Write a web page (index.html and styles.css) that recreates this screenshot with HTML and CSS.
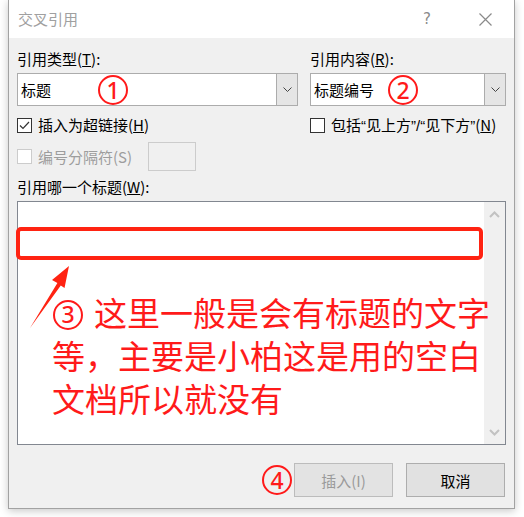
FILE: index.html
```html
<!DOCTYPE html>
<html lang="zh-CN">
<head>
<meta charset="utf-8">
<title>交叉引用</title>
<link rel="stylesheet" href="styles.css">
</head>
<body>
<div class="page">
  <div class="dialog">
    <div class="titlebar">
      <span class="title">交叉引用</span>
      <span class="help">?</span>
      <span class="close">
        <svg width="13" height="13" viewBox="0 0 13 13"><path d="M0.5 0.5 L12.5 12.5 M12.5 0.5 L0.5 12.5" stroke="#8a8a8a" stroke-width="1.2" fill="none"/></svg>
      </span>
    </div>
    <div class="body">
      <div class="grid">
        <div class="label">引用类型(<u>T</u>):</div>
        <div class="label">引用内容(<u>R</u>):</div>
        <div class="combo">
          <span class="combo-text">标题</span>
          <span class="combo-btn"><svg width="9" height="5" viewBox="0 0 9 5"><path d="M0.5 0.5 L4.5 4.5 L8.5 0.5" stroke="#444" stroke-width="1" fill="none"/></svg></span>
        </div>
        <div class="combo">
          <span class="combo-text">标题编号</span>
          <span class="combo-btn"><svg width="9" height="5" viewBox="0 0 9 5"><path d="M0.5 0.5 L4.5 4.5 L8.5 0.5" stroke="#444" stroke-width="1" fill="none"/></svg></span>
        </div>
        <div class="check-row">
          <span class="box"><svg width="13" height="13" viewBox="0 0 13 13"><path d="M2 6.5 L5 9.5 L11 3" stroke="#333" stroke-width="1.2" fill="none"/></svg></span>
          <span class="check-text">插入为超链接(<u>H</u>)</span>
        </div>
        <div class="check-row">
          <span class="box"></span>
          <span class="check-text">包括<span class="q">“</span>见上方<span class="q">”/“</span>见下方<span class="q">”</span>(<u>N</u>)</span>
        </div>
      </div>
      <div class="sep-row">
        <div class="check-row disabled">
          <span class="box"></span>
          <span class="check-text">编号分隔符(S)</span>
        </div>
        <div class="sep-input"></div>
      </div>
      <div class="label list-label">引用哪一个标题(<u>W</u>):</div>
      <div class="listbox">
        <div class="list-area"></div>
        <div class="scrollbar">
          <svg width="11" height="7" viewBox="0 0 11 7"><path d="M1 6 L5.5 1.5 L10 6" stroke="#c2c2c2" stroke-width="2" fill="none"/></svg>
          <svg width="11" height="7" viewBox="0 0 11 7"><path d="M1 1 L5.5 5.5 L10 1" stroke="#c2c2c2" stroke-width="2" fill="none"/></svg>
        </div>
      </div>
      <div class="buttons">
        <button class="btn btn-disabled">插入(I)</button>
        <button class="btn">取消</button>
      </div>
    </div>
  </div>

  <div class="circ num1">1</div>
  <div class="circ num2">2</div>
  <div class="circ num4">4</div>
  <div class="highlight"></div>
  <svg class="arrow" width="60" height="80" viewBox="20 260 60 80">
    <polygon points="69,266 64.5,288 60.8,285.5 30,328 57.4,283 52,280" fill="#ff2312"/>
  </svg>
  <div class="note-text"><span class="circ inline">3</span>这里一般是会有标题的文字<br>等，主要是小柏这是用的空白<br>文档所以就没有</div>
</div>
</body>
</html>
```

FILE: styles.css
```css
html, body {
  margin: 0;
  padding: 0;
  background: #ffffff;
}

.page {
  position: relative;
  width: 524px;
  height: 517px;
  overflow: hidden;
  font-family: "Noto Sans CJK SC", "Noto Sans", sans-serif;
  font-size: 15px;
  color: #000;
}

.dialog {
  position: absolute;
  left: 8px;
  top: 0;
  width: 505px;
  height: 508px;
  border: 1px solid #a2a2a2;
  border-top: none;
  background: #f0f0f0;
  box-shadow: 0 2px 8px rgba(0, 0, 0, 0.22);
  display: flex;
  flex-direction: column;
}

.titlebar {
  height: 38px;
  background: #ffffff;
  display: flex;
  align-items: center;
  padding-left: 9px;
  flex-shrink: 0;
}

.title {
  color: #a0a0a0;
  font-size: 15px;
  line-height: 20px;
  flex: 1;
}

.help {
  color: #8a8a8a;
  font-family: "DejaVu Sans", sans-serif;
  font-size: 15px;
  line-height: 20px;
  width: 10px;
  margin-right: 46px;
}

.close {
  display: flex;
  width: 13px;
  height: 13px;
  margin-right: 22px;
}

.body {
  padding: 11px 8px 0 8px;
  display: flex;
  flex-direction: column;
}

.grid {
  display: grid;
  grid-template-columns: 281px 196px;
  column-gap: 12px;
}

.label {
  line-height: 20px;
  height: 20px;
  white-space: nowrap;
}

.combo {
  margin-top: 4px;
  height: 33px;
  box-sizing: border-box;
  border: 1px solid #acacac;
  background: #ffffff;
  display: flex;
  align-items: stretch;
}

.combo-text {
  flex: 1;
  padding-left: 3px;
  line-height: 31px;
}

.combo-btn {
  width: 20px;
  border-left: 1px solid #acacac;
  background: #e5e5e5;
  display: flex;
  align-items: center;
  justify-content: center;
}

.check-row {
  margin-top: 9px;
  height: 20px;
  display: flex;
  align-items: center;
  white-space: nowrap;
}

.box {
  width: 15px;
  height: 15px;
  box-sizing: border-box;
  border: 1px solid #333333;
  background: #ffffff;
  display: flex;
  align-items: center;
  justify-content: center;
  margin-right: 6px;
  flex-shrink: 0;
}

.check-text {
  line-height: 20px;
}

.q {
  font-family: "Liberation Sans", sans-serif;
}

.sep-row {
  margin-top: 7px;
  display: grid;
  grid-template-columns: 131px 48px;
  align-items: center;
}

.sep-row .check-row {
  margin-top: 0;
}

.disabled .box {
  border-color: #cccccc;
}

.disabled .check-text {
  color: #9d9d9d;
}

.sep-input {
  height: 29px;
  box-sizing: border-box;
  border: 1px solid #cccccc;
  background: #f0f0f0;
}

.list-label {
  margin-top: 6px;
}

.listbox {
  margin-top: 4px;
  height: 244px;
  box-sizing: border-box;
  border: 1px solid #828790;
  background: #ffffff;
  display: flex;
}

.list-area {
  flex: 1;
}

.scrollbar {
  width: 21px;
  background: #f0f0f0;
  display: flex;
  flex-direction: column;
  justify-content: space-between;
  align-items: center;
  padding: 9px 0 8px 0;
}

.buttons {
  margin-top: 18px;
  display: flex;
  justify-content: flex-end;
  gap: 13px;
  padding-right: 1px;
}

.btn {
  width: 99px;
  height: 34px;
  box-sizing: border-box;
  border: 1px solid #adadad;
  background: #e1e1e1;
  font-family: "Noto Sans CJK SC", "Noto Sans", sans-serif;
  font-size: 15px;
  color: #000000;
  padding: 0;
  margin: 0;
}

.btn-disabled {
  color: #9a9a9a;
  border-color: #bcbcbc;
  background: #e3e3e3;
}

/* annotations layered over the dialog */
.circ {
  position: absolute;
  width: 30px;
  height: 30px;
  box-sizing: border-box;
  border: 2.5px solid #ff1a1a;
  border-radius: 50%;
  display: flex;
  align-items: center;
  justify-content: center;
  font-family: "Noto Sans", sans-serif;
  font-size: 23px;
  line-height: 23px;
  font-weight: 500;
  color: #ff1a1a;
}

.num1 { left: 98px; top: 75px; }
.num2 { left: 388px; top: 75px; }
.num4 { left: 262px; top: 465px; }

.circ.inline {
  position: static;
  display: inline-flex;
  vertical-align: 3px;
  margin: 0 11px 0 1px;
}

.highlight {
  position: absolute;
  left: 16px;
  top: 227px;
  width: 467px;
  height: 33px;
  box-sizing: border-box;
  border: 4px solid #ff2312;
  border-radius: 5px;
}

.arrow {
  position: absolute;
  left: 20px;
  top: 260px;
}

.note-text {
  position: absolute;
  left: 52px;
  top: 291px;
  font-family: "Noto Sans CJK SC", sans-serif;
  font-size: 33px;
  line-height: 43px;
  font-weight: 400;
  color: #ff1a1a;
  white-space: nowrap;
}
```
